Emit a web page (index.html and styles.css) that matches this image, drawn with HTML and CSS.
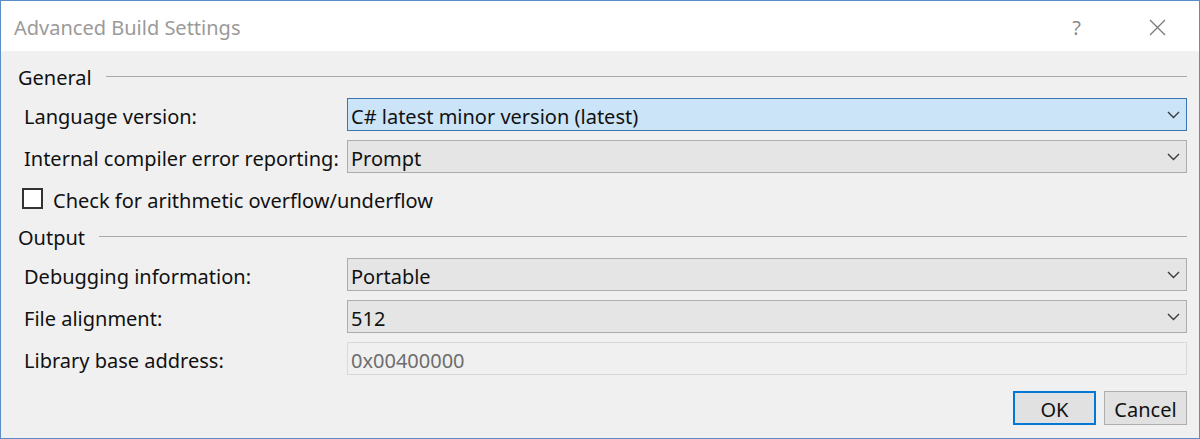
FILE: index.html
```html
<!DOCTYPE html>
<html>
<head>
<meta charset="utf-8">
<link rel="stylesheet" href="styles.css">
</head>
<body>
<div class="window">
  <div class="titlebar">
    <span class="title">Advanced Build Settings</span>
    <span class="help">?</span>
    <span class="close"><svg width="17" height="17" viewBox="0 0 17 17"><path d="M1 1L16 16M16 1L1 16" stroke="#7a7a7a" stroke-width="1.3" fill="none"/></svg></span>
  </div>
  <div class="content">
    <div class="group-header"><span>General</span><div class="rule"></div></div>
    <div class="row">
      <label class="label">Language version:</label>
      <div class="combo focused"><span>C# latest minor version (latest)</span><svg class="chev" width="13" height="8" viewBox="0 0 13 8"><path d="M1 1L6.5 6.5L12 1" stroke="#3a3a3a" stroke-width="1.4" fill="none"/></svg></div>
    </div>
    <div class="row">
      <label class="label">Internal compiler error reporting:</label>
      <div class="combo"><span>Prompt</span><svg class="chev" width="13" height="8" viewBox="0 0 13 8"><path d="M1 1L6.5 6.5L12 1" stroke="#3a3a3a" stroke-width="1.4" fill="none"/></svg></div>
    </div>
    <div class="row check-row">
      <span class="checkbox"></span>
      <span class="check-label">Check for arithmetic overflow/underflow</span>
    </div>
    <div class="group-header"><span>Output</span><div class="rule"></div></div>
    <div class="row">
      <label class="label">Debugging information:</label>
      <div class="combo"><span>Portable</span><svg class="chev" width="13" height="8" viewBox="0 0 13 8"><path d="M1 1L6.5 6.5L12 1" stroke="#3a3a3a" stroke-width="1.4" fill="none"/></svg></div>
    </div>
    <div class="row">
      <label class="label">File alignment:</label>
      <div class="combo"><span>512</span><svg class="chev" width="13" height="8" viewBox="0 0 13 8"><path d="M1 1L6.5 6.5L12 1" stroke="#3a3a3a" stroke-width="1.4" fill="none"/></svg></div>
    </div>
    <div class="row">
      <label class="label">Library base address:</label>
      <div class="textbox disabled"><span>0x00400000</span></div>
    </div>
    <div class="buttons">
      <button class="btn default">OK</button>
      <button class="btn">Cancel</button>
    </div>
  </div>
</div>
</body>
</html>
```
FILE: styles.css
```css
* { box-sizing: border-box; }
html, body { margin: 0; padding: 0; }
body {
  font-family: "Noto Sans", "Open Sans", sans-serif;
  font-size: 20px;
  color: #111;
  background: #f0f0f0;
}
.window {
  width: 1200px;
  height: 439px;
  border: 1px solid #5b8ec4;
  display: flex;
  flex-direction: column;
  background: #f0f0f0;
}
.titlebar {
  height: 50px;
  flex: none;
  background: #fff;
  display: flex;
  align-items: center;
  padding-left: 13px;
}
.title {
  color: #9a9a9a;
  font-size: 20px;
  flex: 1;
  margin-top: 3px;
}
.help {
  color: #8a8a8a;
  font-size: 20px;
  margin-right: 68px;
  margin-top: 3px;
}
.close {
  display: flex;
  margin-right: 33px;
  margin-top: 2px;
}
.content {
  flex: 1;
  padding: 14px 12px 0 17px;
  display: flex;
  flex-direction: column;
}
.group-header {
  height: 24px;
  display: flex;
  align-items: center;
  line-height: 24px;
}
.group-header span { padding-top: 2px; }
.group-header .rule {
  flex: 1;
  height: 1px;
  background: #a9a9a9;
  margin-left: 14px;
  margin-top: -2px;
}
.row {
  height: 33px;
  margin-top: 9px;
  display: flex;
  align-items: center;
  padding-left: 6px;
}
.label, .check-label, .combo span, .textbox span { padding-top: 3px; }
.label {
  width: 323px;
  flex: none;
}
.combo, .textbox {
  flex: 1;
  height: 33px;
  border: 1px solid #adadad;
  background: #e5e5e5;
  display: flex;
  align-items: center;
  padding-left: 3px;
}
.combo span, .textbox span { flex: 1; }
.combo.focused {
  background: #cce4f7;
  border-color: #3a75b0;
}
.chev { margin-right: 6px; }
.textbox.disabled {
  background: #f0f0f0;
  border-color: #d9d9d9;
  color: #6d6d6d;
}
.check-row { padding-left: 4px; }
.row + .group-header { margin-top: 10px; }
.checkbox {
  width: 21px;
  height: 21px;
  border: 2px solid #333;
  background: #fff;
  margin-right: 10px;
}
.buttons {
  display: flex;
  justify-content: flex-end;
  gap: 8px;
  margin-top: 16px;
}
.btn {
  font-family: inherit;
  font-size: 20px;
  color: #111;
  height: 34px;
  width: 83px;
  background: #e1e1e1;
  border: 1px solid #adadad;
  padding: 2px 0 0;
}
.btn.default {
  border: 2px solid #0078d7;
}
```
